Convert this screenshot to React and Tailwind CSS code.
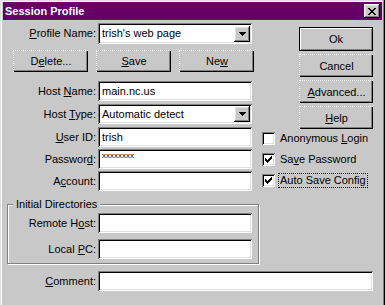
const font = "font-['Liberation_Sans',Arial,sans-serif]";

// win95 bevels
const sunken =
  "bg-white shadow-[inset_1px_1px_0_#808080,inset_-1px_-1px_0_#fff,inset_2px_2px_0_#000,inset_-2px_-2px_0_#dfdfdf]";
const raised =
  "bg-[#c8c8c8] shadow-[inset_-1px_-1px_0_#000,inset_1px_1px_0_#fff,inset_-2px_-2px_0_#808080,inset_2px_2px_0_#dfdfdf]";

const CLOSE = ["xx....xx", ".xx..xx.", "..xxxx..", "...xx...", "..xxxx..", ".xx..xx.", "xx....xx"];
const ARROW = ["xxxxxxx", ".xxxxx.", "..xxx..", "...x..."];
const CHECK = ["......x", ".....xx", "x...xxx", "xx.xxx.", "xxxxx..", ".xxx...", "..x...."];

const Pixels = ({ rows }) => (
  <svg width={rows[0].length} height={rows.length} shapeRendering="crispEdges">
    {rows.flatMap((r, y) =>
      [...r].map((c, x) =>
        c === "x" ? <rect key={`${x}-${y}`} x={x} y={y} width="1" height="1" fill="#000" /> : null
      )
    )}
  </svg>
);

// text with one underlined mnemonic letter
const Mn = ({ text, u }) =>
  u == null ? (
    text
  ) : (
    <>
      {text.slice(0, u)}
      <span className="underline underline-offset-[1px]">{text[u]}</span>
      {text.slice(u + 1)}
    </>
  );

const Row = ({ label, u, wide, className = "", children }) => (
  <div className={`flex items-center ${className}`}>
    <span className={`${wide ? "w-[95px]" : "w-[90px]"} shrink-0 pr-[2px] text-right leading-[13px]`}>
      <Mn text={label} u={u} />
    </span>
    {children}
  </div>
);

const TextBox = ({ value, className = "w-[154px] h-[20px]" }) => (
  <div className={`${className} ${sunken} flex items-center pl-[4px] leading-[13px]`}>{value}</div>
);

const Combo = ({ value, className = "h-[20px]" }) => (
  <div className={`w-[154px] ${className} ${sunken} flex items-center pl-[4px] pr-[2px] leading-[13px]`}>
    <span className="flex-1">{value}</span>
    <div className={`${raised} flex h-[16px] w-[16px] items-center justify-center`}>
      <Pixels rows={ARROW} />
    </div>
  </div>
);

const SmallButton = ({ label, u }) => (
  <div className="flex h-[22px] w-[75px] items-center justify-center border-l border-t border-dotted border-white shadow-[inset_-1px_-1px_0_#000,inset_-2px_-2px_0_#808080]">
    <Mn text={label} u={u} />
  </div>
);

const SideButton = ({ label, u }) => (
  <div className="ml-[39px] mt-[3px] flex h-[23px] w-[74px] items-center justify-center border-l border-t border-dotted border-white shadow-[inset_-1px_-1px_0_#000,inset_-2px_-2px_0_#808080]">
    <Mn text={label} u={u} />
  </div>
);

const Check = ({ label, u, checked, focus, className }) => (
  <div className={`ml-[2px] flex h-[13px] items-center ${className}`}>
    <div className={`${sunken} flex h-[13px] w-[13px] shrink-0 items-center justify-center`}>
      {checked && <Pixels rows={CHECK} />}
    </div>
    <span
      className={`ml-[4px] px-[1px] leading-[13px] ${focus ? "outline outline-1 outline-dotted outline-black" : ""}`}
    >
      <Mn text={label} u={u} />
    </span>
  </div>
);

export default function App() {
  return (
    <div
      className={`h-[305px] w-[385px] overflow-hidden bg-[#c8c8c8] pl-[3px] pr-[3px] pt-[2px] text-[11px] text-black ${font} shadow-[inset_-1px_0_0_#000,inset_-2px_0_0_#808080,inset_1px_1px_0_#dfdfdf,inset_2px_2px_0_#fff]`}
    >
      {/* title bar */}
      <div className="flex h-[18px] items-center justify-between bg-[#660066] pl-[2px] pr-[2px]">
        <span className="font-bold text-white">Session Profile</span>
        <div className={`${raised} flex h-[14px] w-[16px] items-center justify-center`}>
          <Pixels rows={CLOSE} />
        </div>
      </div>

      <div className="flex">
        {/* left column */}
        <div className="w-[257px] shrink-0">
          <Row label="Profile Name:" u={0} wide className="mt-[3px]">
            <Combo value="trish's web page" className="h-[21px]" />
          </Row>

          <div className="mt-[6px] flex gap-[8px] pl-[10px]">
            <SmallButton label="Delete..." u={1} />
            <SmallButton label="Save" u={0} />
            <SmallButton label="New" u={2} />
          </div>

          <Row label="Host Name:" u={5} wide className="mt-[9px]">
            <TextBox value="main.nc.us" />
          </Row>
          <Row label="Host Type:" u={5} wide className="mt-[3px]">
            <Combo value="Automatic detect" />
          </Row>
          <Row label="User ID:" u={0} wide className="mt-[3px]">
            <TextBox value="trish" />
          </Row>
          <Row label="Password:" u={7} wide className="mt-[2px]">
            <div className={`h-[20px] w-[154px] ${sunken} pl-[4px] pt-[3px] text-[8px] leading-[8px]`}>
              xxxxxxxx
            </div>
          </Row>
          <Row label="Account:" u={1} wide className="mt-[2px]">
            <TextBox value="" />
          </Row>

          <fieldset className="ml-[4px] mt-[7px] w-[252px] border border-[#808080] pb-[4px] shadow-[1px_1px_0_#fff,inset_1px_1px_0_#fff]">
            <legend className="ml-[5px] bg-[#c8c8c8] px-[3px] leading-[13px]">Initial Directories</legend>
            <Row label="Remote Host:" u={8} className="mt-[2px]">
              <TextBox value="" />
            </Row>
            <Row label="Local PC:" u={6} className="mt-[6px]">
              <TextBox value="" />
            </Row>
          </fieldset>
        </div>

        {/* right column */}
        <div className="flex-1">
          <div className="ml-[39px] mt-[7px] flex h-[24px] w-[74px] items-center justify-center border border-black shadow-[inset_1px_1px_0_#fff,inset_-1px_-1px_0_#808080]">
            Ok
          </div>
          <SideButton label="Cancel" />
          <SideButton label="Advanced..." u={0} />
          <SideButton label="Help" u={0} />

          <Check label="Anonymous Login" u={10} className="mt-[3px]" />
          <Check label="Save Password" u={2} checked className="mt-[8px]" />
          <Check label="Auto Save Config" checked focus className="mt-[8px]" />
        </div>
      </div>

      <Row label="Comment:" u={0} wide className="mt-[7px]">
        <TextBox value="" className="h-[20px] w-[275px]" />
      </Row>
    </div>
  );
}
